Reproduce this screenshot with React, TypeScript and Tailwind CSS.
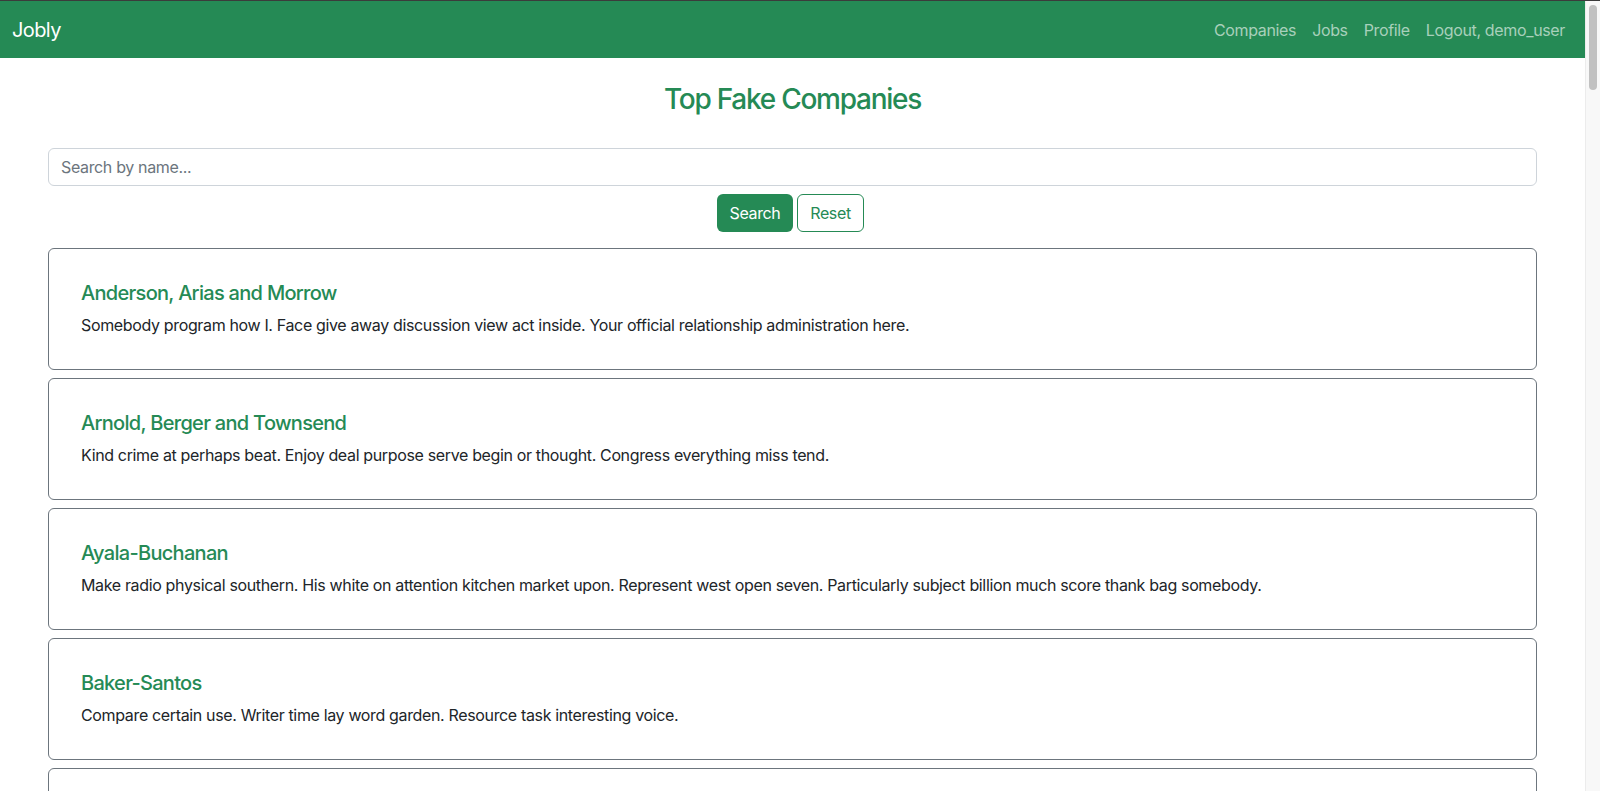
import React from "react";

const companies = [
  {
    name: "Anderson, Arias and Morrow",
    description:
      "Somebody program how I. Face give away discussion view act inside. Your official relationship administration here.",
  },
  {
    name: "Arnold, Berger and Townsend",
    description:
      "Kind crime at perhaps beat. Enjoy deal purpose serve begin or thought. Congress everything miss tend.",
  },
  {
    name: "Ayala-Buchanan",
    description:
      "Make radio physical southern. His white on attention kitchen market upon. Represent west open seven. Particularly subject billion much score thank bag somebody.",
  },
  {
    name: "Baker-Santos",
    description:
      "Compare certain use. Writer time lay word garden. Resource task interesting voice.",
  },
  {
    name: "Bauer, Gallagher and Good",
    description: "Statement use per mission method. Order truth method.",
  },
];

export default function App() {
  return (
    <div
      className="h-[791px] w-full overflow-hidden flex flex-col bg-white text-[#212529]"
      style={{ fontFamily: "Inter, 'Noto Sans', 'Liberation Sans', sans-serif" }}
    >
      <div className="h-px w-full bg-[#3b3b3b] shrink-0" />
      <div className="flex flex-1 min-h-0">
        <div className="flex-1 min-w-0 flex flex-col">
          <nav className="h-[57px] shrink-0 bg-[#258a55] flex items-center justify-between px-3">
            <span className="text-[20px] leading-none tracking-[-0.03em] text-white">Jobly</span>
            <div className="flex items-center text-[16px] tracking-[-0.022em] text-[#a8d0bb]">
              <span className="px-2">Companies</span>
              <span className="px-2">Jobs</span>
              <span className="px-2">Profile</span>
              <span className="px-2">Logout, demo_user</span>
            </div>
          </nav>
          <main className="px-12 flex flex-col">
            <h2 className="mt-[25px] text-center text-[28px] leading-[1.2] font-medium tracking-[-0.045em] text-[#258a55]">
              Top Fake Companies
            </h2>
            <div className="mt-[31px] h-[38px] border border-[#ced4da] rounded-[6px] flex items-center px-3 text-[16px] tracking-[-0.022em] text-[#6c757d]">
              Search by name...
            </div>
            <div className="mt-2 flex justify-center gap-1 pr-1">
              <button className="h-[38px] w-[76px] rounded-[6px] bg-[#258a55] text-white text-[16px] tracking-[-0.022em]">
                Search
              </button>
              <button className="h-[38px] w-[67px] rounded-[6px] border border-[#258a55] text-[#258a55] text-[16px] tracking-[-0.022em]">
                Reset
              </button>
            </div>
            <div className="mt-4 flex flex-col gap-2">
              {companies.map((c) => (
                <div
                  key={c.name}
                  className="border border-[#6c757d] rounded-[6px] p-8 shrink-0"
                >
                  <h5 className="text-[20px] leading-[24px] font-medium tracking-[-0.035em] text-[#258a55] mb-2">
                    {c.name}
                  </h5>
                  <p className="text-[16px] leading-[24px] tracking-[-0.022em]">{c.description}</p>
                </div>
              ))}
            </div>
          </main>
        </div>
        <div className="w-[15px] shrink-0 bg-[#f8f8f8] border-l border-[#ececec] pl-[3px] pt-1">
          <div className="w-2 h-[85px] rounded-full bg-[#c1c1c1]" />
        </div>
      </div>
    </div>
  );
}
